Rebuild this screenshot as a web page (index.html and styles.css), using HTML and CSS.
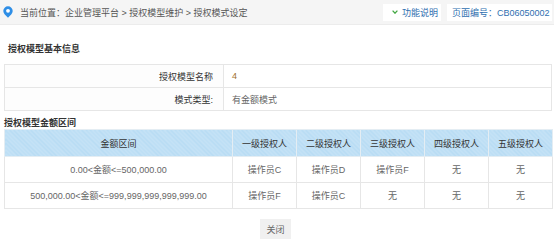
FILE: index.html
```html
<!DOCTYPE html>
<html lang="zh">
<head>
    <meta charset="UTF-8">
    <title>授权模式设定</title>
    <link rel="stylesheet" href="styles.css">
</head>
<body>
    <div class="topbar">
        <div class="crumb">
            <svg class="pin" width="10" height="12" viewBox="0 0 10 12">
                <path d="M5 0.3a4.7 4.7 0 0 1 4.7 4.7c0 2.5-2.4 4.6-4.7 6.7C2.7 9.6 0.3 7.5 0.3 5A4.7 4.7 0 0 1 5 0.3z" fill="#2e8ee6"/>
                <circle cx="5" cy="4.8" r="1.9" fill="#fff"/>
            </svg>
            <span>当前位置：企业管理平台 &gt; 授权模型维护 &gt; 授权模式设定</span>
        </div>
        <div class="tools">
            <span class="tool help">
                <svg class="chev" width="6" height="4" viewBox="0 0 6 4">
                    <path d="M0.6 0.6L3 3.2L5.4 0.6" fill="none" stroke="#44a844" stroke-width="1.3"/>
                </svg>
                功能说明
            </span>
            <span class="tool code">页面编号：CB06050002</span>
        </div>
    </div>

    <h2 class="section first">授权模型基本信息</h2>
    <table class="info">
        <colgroup>
            <col style="width: 219px">
            <col>
        </colgroup>
        <tr>
            <td class="label">授权模型名称</td>
            <td class="num">4</td>
        </tr>
        <tr>
            <td class="label">模式类型:</td>
            <td>有金额模式</td>
        </tr>
    </table>

    <h2 class="section second">授权模型金额区间</h2>
    <table class="grid">
        <colgroup>
            <col style="width: 228px">
            <col style="width: 64px">
            <col style="width: 64px">
            <col style="width: 64px">
            <col style="width: 64px">
            <col style="width: 64px">
        </colgroup>
        <tr>
            <th>金额区间</th>
            <th>一级授权人</th>
            <th>二级授权人</th>
            <th>三级授权人</th>
            <th>四级授权人</th>
            <th>五级授权人</th>
        </tr>
        <tr>
            <td>0.00&lt;金额&lt;=500,000.00</td>
            <td>操作员C</td>
            <td>操作员D</td>
            <td>操作员F</td>
            <td>无</td>
            <td>无</td>
        </tr>
        <tr>
            <td>500,000.00&lt;金额&lt;=999,999,999,999,999.00</td>
            <td>操作员F</td>
            <td>操作员C</td>
            <td>无</td>
            <td>无</td>
            <td>无</td>
        </tr>
    </table>

    <div class="actions">
        <button class="btn">关闭</button>
    </div>
</body>
</html>
```

FILE: styles.css
```css
body {
    margin: 0;
    font-family: "Liberation Sans", "Noto Sans CJK SC", sans-serif;
    font-size: 9px;
    color: #333;
    background: #fff;
}

.topbar {
    display: flex;
    justify-content: space-between;
    align-items: center;
    height: 24px;
    background: #f5f5f5;
    border-bottom: 1px solid #ececec;
    padding: 0 2px 0 3px;
}

.crumb {
    display: flex;
    align-items: center;
    gap: 7px;
    color: #555;
}

.tools {
    display: flex;
    gap: 6px;
}

.tool {
    display: flex;
    align-items: center;
    background: #fff;
    color: #2f6fb0;
    height: 17px;
}

.tool.help {
    width: 58px;
    padding-left: 9px;
    box-sizing: border-box;
    gap: 4px;
}

.tool.code {
    width: 105px;
    padding-left: 5px;
    box-sizing: border-box;
}

.section {
    font-size: 9px;
    font-weight: bold;
    margin: 0;
    padding: 0 4px;
    line-height: 12px;
    height: 12px;
}

.section.first {
    margin-top: 18px;
    margin-bottom: 9px;
    padding-left: 8px;
}

.section.second {
    margin-top: 6px;
}

table {
    border-collapse: collapse;
    table-layout: fixed;
    margin: 0 4px;
    width: 548px;
}

td, th {
    border: 1px solid #e6e6e6;
    padding: 0 8px;
    white-space: nowrap;
}

.info td {
    height: 22px;
    color: #666;
}

.info .label {
    text-align: right;
    color: #333;
    background: #fdfdfd;
    padding-right: 10px;
}

.info .num {
    color: #a0702e;
}

.grid th {
    height: 26px;
    font-weight: normal;
    color: #333;
    padding: 0;
    background: repeating-linear-gradient(45deg, #b6dbf3 0 1px, #c4e2f6 1px 3px);
    border-color: #e4edf3;
}

.grid td {
    height: 25px;
    text-align: center;
    color: #666;
    padding: 0;
}

.actions {
    display: flex;
    justify-content: center;
    padding-top: 10px;
    padding-right: 3px;
}

.btn {
    font: inherit;
    color: #666;
    background: #f0f0f0;
    border: none;
    width: 31px;
    height: 20px;
    padding: 0;
}
```
